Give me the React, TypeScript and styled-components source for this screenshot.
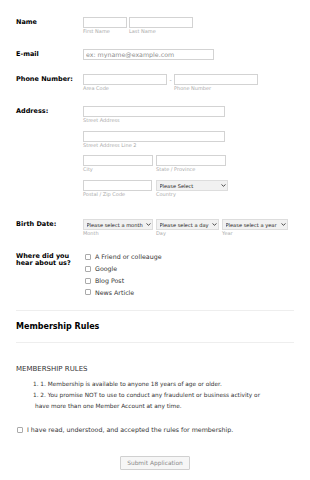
import React from 'react';
import styled, { createGlobalStyle } from 'styled-components';

const GlobalStyle = createGlobalStyle`
  body {
    margin: 0;
    background: #fff;
    font-family: "DejaVu Sans", Verdana, sans-serif;
    color: #333;
  }
`;

const chevron =
  "url(\"data:image/svg+xml;utf8,<svg xmlns='http://www.w3.org/2000/svg' width='6' height='4' viewBox='0 0 6 4'><path d='M0.6 0.7 L3 3 L5.4 0.7' fill='none' stroke='%23333' stroke-width='1.1'/></svg>\")";

const Form = styled.form`
  padding: 10px 16px 12px;
`;

const Row = styled.div<{ $pb?: number }>`
  display: flex;
  padding: 7px 0 ${({ $pb }) => $pb ?? 7}px;
`;

const Label = styled.div`
  width: 67px;
  flex-shrink: 0;
  box-sizing: border-box;
  padding: 1.6px 6px 0 0;
  font-weight: bold;
  font-size: 6.5px;
  line-height: 7.5px;
  color: #000;
`;

const Fields = styled.div`
  display: flex;
  flex-direction: column;
`;

const FieldLine = styled.div<{ $gap?: number; $mb?: number }>`
  display: flex;
  align-items: flex-start;
  gap: ${({ $gap }) => $gap ?? 2}px;
  margin-bottom: ${({ $mb }) => $mb ?? 0}px;
`;

const Field = styled.div<{ $w: number }>`
  width: ${({ $w }) => $w}px;
  display: flex;
  flex-direction: column;
`;

const TextInput = styled.input`
  width: 100%;
  height: 11px;
  box-sizing: border-box;
  margin: 0;
  border: 1px solid #d3d3d3;
  padding: 0 2px;
  font-family: "DejaVu Sans", Verdana, sans-serif;
  font-size: 6.3px;
  color: #333;
  background: #fff;
  outline: none;

  &::placeholder {
    color: #8f8f8f;
  }
`;

const Select = styled.select`
  width: 100%;
  height: 11px;
  box-sizing: border-box;
  margin: 0;
  appearance: none;
  border: 1px solid #ddd;
  border-radius: 0;
  padding: 0 0 0 2.5px;
  background: #f1f1f1 ${chevron} no-repeat right 1.5px center / 4.5px 3px;
  font-family: "DejaVu Sans", Verdana, sans-serif;
  font-size: 5.1px;
  color: #1a1a1a;
  outline: none;
`;

const Sub = styled.span`
  font-size: 5px;
  line-height: 7px;
  color: #aaa;
  white-space: nowrap;
`;

const Dash = styled.span`
  width: 7px;
  height: 11px;
  line-height: 11px;
  text-align: center;
  font-size: 6px;
  color: #999;
`;

const Checks = styled.div`
  display: flex;
  flex-direction: column;
`;

const CheckItem = styled.label<{ $pl?: number }>`
  display: flex;
  align-items: center;
  gap: 4px;
  height: 11.8px;
  padding-left: ${({ $pl }) => $pl ?? 2}px;
  font-size: 6.3px;
  color: #333;
`;

const Box = styled.input`
  appearance: none;
  margin: 0;
  width: 6px;
  height: 6px;
  box-sizing: border-box;
  border: 1px solid #aaa;
  border-radius: 1px;
  background: #fff;
  flex-shrink: 0;
`;

const Rule = styled.hr<{ $mt?: number }>`
  margin: ${({ $mt }) => $mt ?? 0}px 0 0;
  border: 0;
  border-top: 1px solid #eee;
`;

const SectionTitle = styled.h2`
  margin: 0;
  padding: 10.5px 0 10.5px;
  font-size: 8px;
  line-height: 10px;
  font-weight: bold;
  color: #000;
`;

const RulesHeading = styled.div`
  margin-top: 22px;
  font-size: 7px;
  line-height: 9px;
  color: #333;
`;

const RulesList = styled.ol`
  list-style: none;
  margin: 5px 0 0;
  padding: 0 30px 0 19px;
  font-size: 5.8px;
  line-height: 11px;
  color: #333;
`;

const RuleItem = styled.li`
  text-indent: -2px;
`;

const Agree = styled.div`
  margin-top: 11.5px;
  line-height: 10px;
`;

const Actions = styled.div`
  display: flex;
  justify-content: center;
  margin-top: 20px;
`;

const SubmitButton = styled.button`
  height: 14px;
  padding: 0 6px;
  border: 1px solid #d0d0d0;
  border-radius: 1px;
  background: #f6f6f6;
  font-family: "DejaVu Sans", Verdana, sans-serif;
  font-size: 5.9px;
  color: #8a8a8a;
`;

const sources = ['A Friend or colleauge', 'Google', 'Blog Post', 'News Article'];

const rules = [
  '1. 1. Membership is available to anyone 18 years of age or older.',
  '1. 2. You promise NOT to use to conduct any fraudulent or business activity or have more than one Member Account at any time.',
];

export default function App() {
  return (
    <>
      <GlobalStyle />
      <Form onSubmit={(e) => e.preventDefault()}>
        <Row>
          <Label>Name</Label>
          <FieldLine>
            <Field $w={44}>
              <TextInput />
              <Sub>First Name</Sub>
            </Field>
            <Field $w={64}>
              <TextInput />
              <Sub>Last Name</Sub>
            </Field>
          </FieldLine>
        </Row>

        <Row>
          <Label>E-mail</Label>
          <Field $w={131}>
            <TextInput placeholder="ex: myname@example.com" />
          </Field>
        </Row>

        <Row>
          <Label>Phone Number:</Label>
          <FieldLine $gap={0}>
            <Field $w={84}>
              <TextInput />
              <Sub>Area Code</Sub>
            </Field>
            <Dash>-</Dash>
            <Field $w={84}>
              <TextInput />
              <Sub>Phone Number</Sub>
            </Field>
          </FieldLine>
        </Row>

        <Row $pb={14}>
          <Label>Address:</Label>
          <Fields>
            <FieldLine $mb={6.7}>
              <Field $w={142}>
                <TextInput />
                <Sub>Street Address</Sub>
              </Field>
            </FieldLine>
            <FieldLine $mb={6.7}>
              <Field $w={142}>
                <TextInput />
                <Sub>Street Address Line 2</Sub>
              </Field>
            </FieldLine>
            <FieldLine $gap={3} $mb={6.7}>
              <Field $w={70}>
                <TextInput />
                <Sub>City</Sub>
              </Field>
              <Field $w={70}>
                <TextInput />
                <Sub>State / Province</Sub>
              </Field>
            </FieldLine>
            <FieldLine $gap={4}>
              <Field $w={69}>
                <TextInput />
                <Sub>Postal / Zip Code</Sub>
              </Field>
              <Field $w={72}>
                <Select defaultValue="">
                  <option value="">Please Select</option>
                </Select>
                <Sub>Country</Sub>
              </Field>
            </FieldLine>
          </Fields>
        </Row>

        <Row>
          <Label>Birth Date:</Label>
          <FieldLine $gap={3}>
            <Field $w={70}>
              <Select defaultValue="">
                <option value="">Please select a month</option>
              </Select>
              <Sub>Month</Sub>
            </Field>
            <Field $w={63}>
              <Select defaultValue="">
                <option value="">Please select a day</option>
              </Select>
              <Sub>Day</Sub>
            </Field>
            <Field $w={66}>
              <Select defaultValue="">
                <option value="">Please select a year</option>
              </Select>
              <Sub>Year</Sub>
            </Field>
          </FieldLine>
        </Row>

        <Row>
          <Label>Where did you hear about us?</Label>
          <Checks>
            {sources.map((s) => (
              <CheckItem key={s}>
                <Box type="checkbox" />
                {s}
              </CheckItem>
            ))}
          </Checks>
        </Row>

        <Rule $mt={5} />
        <SectionTitle>Membership Rules</SectionTitle>
        <Rule />

        <RulesHeading>MEMBERSHIP RULES</RulesHeading>
        <RulesList>
          {rules.map((r) => (
            <RuleItem key={r}>{r}</RuleItem>
          ))}
        </RulesList>

        <Agree>
          <CheckItem $pl={1}>
            <Box type="checkbox" />
            I have read, understood, and accepted the rules for membership.
          </CheckItem>
        </Agree>

        <Actions>
          <SubmitButton type="submit">Submit Application</SubmitButton>
        </Actions>
      </Form>
    </>
  );
}
